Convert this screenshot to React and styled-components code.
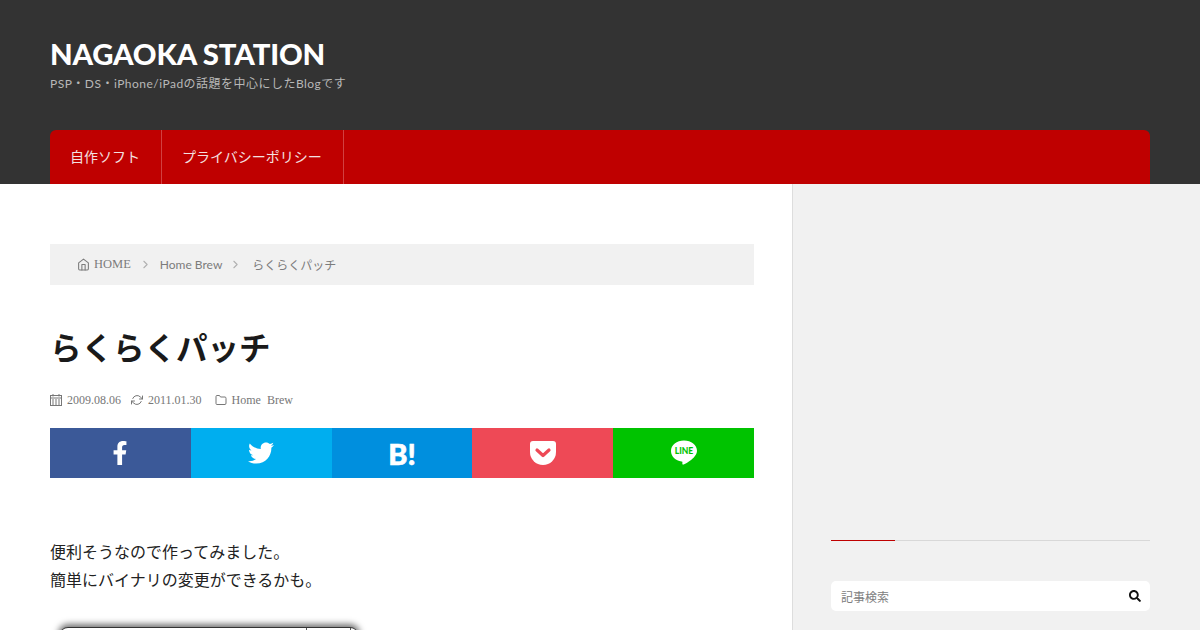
import React from "react";
import styled, { createGlobalStyle } from "styled-components";
import { FaFacebookF, FaTwitter, FaSearch } from "react-icons/fa";
import { FiHome, FiChevronRight, FiRefreshCw, FiFolder } from "react-icons/fi";

const GlobalStyle = createGlobalStyle`
  html, body {
    margin: 0;
    padding: 0;
    height: 630px;
    overflow: hidden;
    background: #fff;
    font-family: Lato, "Noto Sans CJK JP", sans-serif;
  }
  * {
    box-sizing: border-box;
  }
`;

const Page = styled.div`
  width: 1200px;
  height: 630px;
  overflow: hidden;
`;

const Header = styled.header`
  height: 184px;
  background: #333;
  padding: 37px 50px 0;
  display: flex;
  flex-direction: column;
`;

const SiteTitle = styled.h1`
  margin: 0;
  font-size: 29.3px;
  line-height: 34px;
  font-weight: 900;
  letter-spacing: -0.15px;
  color: #fff;
`;

const Tagline = styled.p`
  margin: 4px 0 0;
  font-size: 12px;
  line-height: 18px;
  letter-spacing: 0.48px;
  color: #b8b8b8;
`;

const Nav = styled.nav`
  margin-top: auto;
  height: 54px;
  background: #bf0000;
  border-radius: 6px 6px 0 0;
  display: flex;
`;

const NavItem = styled.a`
  padding: 0 21px 2px 20px;
  display: flex;
  align-items: center;
  font-size: 14px;
  color: #f4e0e0;
  border-right: 1px solid #d14040;
`;

const Main = styled.div`
  display: flex;
  height: 446px;
`;

const Content = styled.main`
  width: 792px;
  padding: 60px 38px 0 50px;
`;

const Breadcrumb = styled.div`
  height: 41px;
  background: #f1f1f1;
  padding-left: 27px;
  display: flex;
  align-items: center;
  font-size: 12px;
  color: #7c7c7c;
`;

const Crumb = styled.span`
  display: flex;
  align-items: center;
  gap: 4px;
  font-family: ${(p) => (p.$serif ? '"Liberation Serif", serif' : 'Lato, "Noto Sans CJK JP", sans-serif')};
  font-size: ${(p) => (p.$serif ? "12.500px" : "12px")};
  svg {
    font-size: 13px;
  }
`;

const CrumbSep = styled.span`
  display: flex;
  color: #b0b0b0;
  font-size: 13px;
  margin: 0 ${(p) => p.$after}px 0 ${(p) => p.$before}px;
`;

const PostTitle = styled.h2`
  margin: 41px 0 0;
  font-size: 31.500px;
  line-height: 40px;
  font-weight: 700;
  color: #1a1a1a;
  font-family: "Noto Sans CJK JP", sans-serif;
`;

const Meta = styled.div`
  margin-top: 25px;
  height: 18px;
  display: flex;
  align-items: center;
  font-family: "Liberation Serif", serif;
  font-size: 12px;
  color: #777;
`;

const MetaItem = styled.span`
  display: flex;
  align-items: center;
  gap: 5px;
  margin-right: ${(p) => p.$space}px;
  svg {
    font-size: 12px;
  }
`;

const ShareRow = styled.div`
  margin-top: 19px;
  height: 50px;
  display: grid;
  grid-template-columns: repeat(5, 1fr);
`;

const ShareButton = styled.a`
  background: ${(p) => p.$color};
  color: #fff;
  display: flex;
  align-items: center;
  justify-content: center;
  font-size: ${(p) => p.$size || 24}px;
`;

const HatenaMark = styled.span`
  font-family: Lato, sans-serif;
  font-weight: 900;
  font-size: 29px;
  line-height: 1;
  -webkit-text-stroke: 0.6px #fff;
`;

const Body = styled.div`
  margin-top: 59px;
  font-size: 16px;
  line-height: 28px;
  color: #222;
  font-family: "Noto Sans CJK JP", sans-serif;
`;

const Line = styled.p`
  margin: 0;
`;

const Screenshot = styled.div`
  margin: 34px 0 0 10px;
  width: 298px;
  height: 40px;
  background: #fff;
  border-top: 1px solid #333;
  border-radius: 8px 8px 0 0;
  box-shadow: 0 -1px 6px 2px rgba(0, 0, 0, 0.55);
  display: flex;
  justify-content: flex-end;
  padding-right: 7px;
`;

const ScreenshotButton = styled.div`
  width: 45px;
  height: 100%;
  border-left: 1px solid #555;
  border-right: 1px solid #555;
`;

const Sidebar = styled.aside`
  width: 408px;
  background: #f1f1f1;
  border-left: 1px solid #ddd;
  padding: 356px 50px 0 38px;
`;

const WidgetRule = styled.div`
  height: 1px;
  background: #d8d8d8;
  display: flex;
`;

const WidgetAccent = styled.div`
  width: 64px;
  height: 1px;
  background: #bf0000;
`;

const SearchBox = styled.div`
  margin-top: 40px;
  height: 30px;
  background: #fff;
  border-radius: 5px;
  display: flex;
  align-items: center;
  justify-content: space-between;
  padding: 0 9px 0 10px;
  font-size: 12px;
  color: #808080;
  svg {
    color: #111;
    font-size: 12px;
  }
`;

const CalendarIcon = () => (
  <svg width="12" height="12" viewBox="0 0 12 12" fill="none" stroke="currentColor" strokeWidth="1">
    <rect x="0.500" y="1.500" width="11" height="10" />
    <path d="M0.500 4h11M3 0v2.500M9 0v2.500" />
    <path d="M2 6h2M5 6h2M8 6h2M2 8h2M5 8h2M8 8h2M2 10h2M5 10h2M8 10h2" strokeWidth="1" />
  </svg>
);

const PocketIcon = () => (
  <svg width="26" height="24" viewBox="0 0 26 24">
    <path d="M3 0h20a3 3 0 0 1 3 3v8a13 13 0 0 1-26 0V3a3 3 0 0 1 3-3z" fill="#fff" />
    <path d="M7 9l6 5.500L19 9" fill="none" stroke="#ee4956" strokeWidth="3.200" strokeLinecap="round" strokeLinejoin="round" />
  </svg>
);

const LineIcon = () => (
  <svg width="26" height="26" viewBox="0 0 26 26">
    <path
      d="M13 .5C5.800.5 0 4.900 0 11c0 5.400 4.500 9.700 10.600 10.500.8.100.9.500.8 1.200-.1.800-.2 2.500 1.400 1.700 2-1 7.300-4 10-7 1.500-1.700 3.200-3.900 3.200-6.400C26 4.900 20.200.5 13 .5z"
      fill="#fff"
    />
    <text x="13" y="14.300" textAnchor="middle" fontFamily="Lato, sans-serif" fontWeight="900" fontSize="8.500" fill="#00c300">
      LINE
    </text>
  </svg>
);

export default function App() {
  return (
    <Page>
      <GlobalStyle />
      <Header>
        <SiteTitle>NAGAOKA STATION</SiteTitle>
        <Tagline>PSP・DS・iPhone/iPadの話題を中心にしたBlogです</Tagline>
        <Nav>
          <NavItem>自作ソフト</NavItem>
          <NavItem>プライバシーポリシー</NavItem>
        </Nav>
      </Header>
      <Main>
        <Content>
          <Breadcrumb>
            <Crumb $serif>
              <FiHome />
              HOME
            </Crumb>
            <CrumbSep $before={8} $after={8}>
              <FiChevronRight />
            </CrumbSep>
            <Crumb>Home Brew</Crumb>
            <CrumbSep $before={7} $after={10}>
              <FiChevronRight />
            </CrumbSep>
            <Crumb>らくらくパッチ</Crumb>
          </Breadcrumb>
          <PostTitle>らくらくパッチ</PostTitle>
          <Meta>
            <MetaItem $space={10}>
              <CalendarIcon />
              2009.08.06
            </MetaItem>
            <MetaItem $space={13}>
              <FiRefreshCw />
              2011.01.30
            </MetaItem>
            <MetaItem $space={0}>
              <FiFolder />
              Home&nbsp; Brew
            </MetaItem>
          </Meta>
          <ShareRow>
            <ShareButton $color="#3b5998">
              <FaFacebookF />
            </ShareButton>
            <ShareButton $color="#00aeef" $size={26}>
              <FaTwitter />
            </ShareButton>
            <ShareButton $color="#008fde">
              <HatenaMark>B!</HatenaMark>
            </ShareButton>
            <ShareButton $color="#ee4956">
              <PocketIcon />
            </ShareButton>
            <ShareButton $color="#00c300">
              <LineIcon />
            </ShareButton>
          </ShareRow>
          <Body>
            <Line>便利そうなので作ってみました。</Line>
            <Line>簡単にバイナリの変更ができるかも。</Line>
          </Body>
          <Screenshot>
            <ScreenshotButton />
          </Screenshot>
        </Content>
        <Sidebar>
          <WidgetRule>
            <WidgetAccent />
          </WidgetRule>
          <SearchBox>
            記事検索
            <FaSearch />
          </SearchBox>
        </Sidebar>
      </Main>
    </Page>
  );
}
